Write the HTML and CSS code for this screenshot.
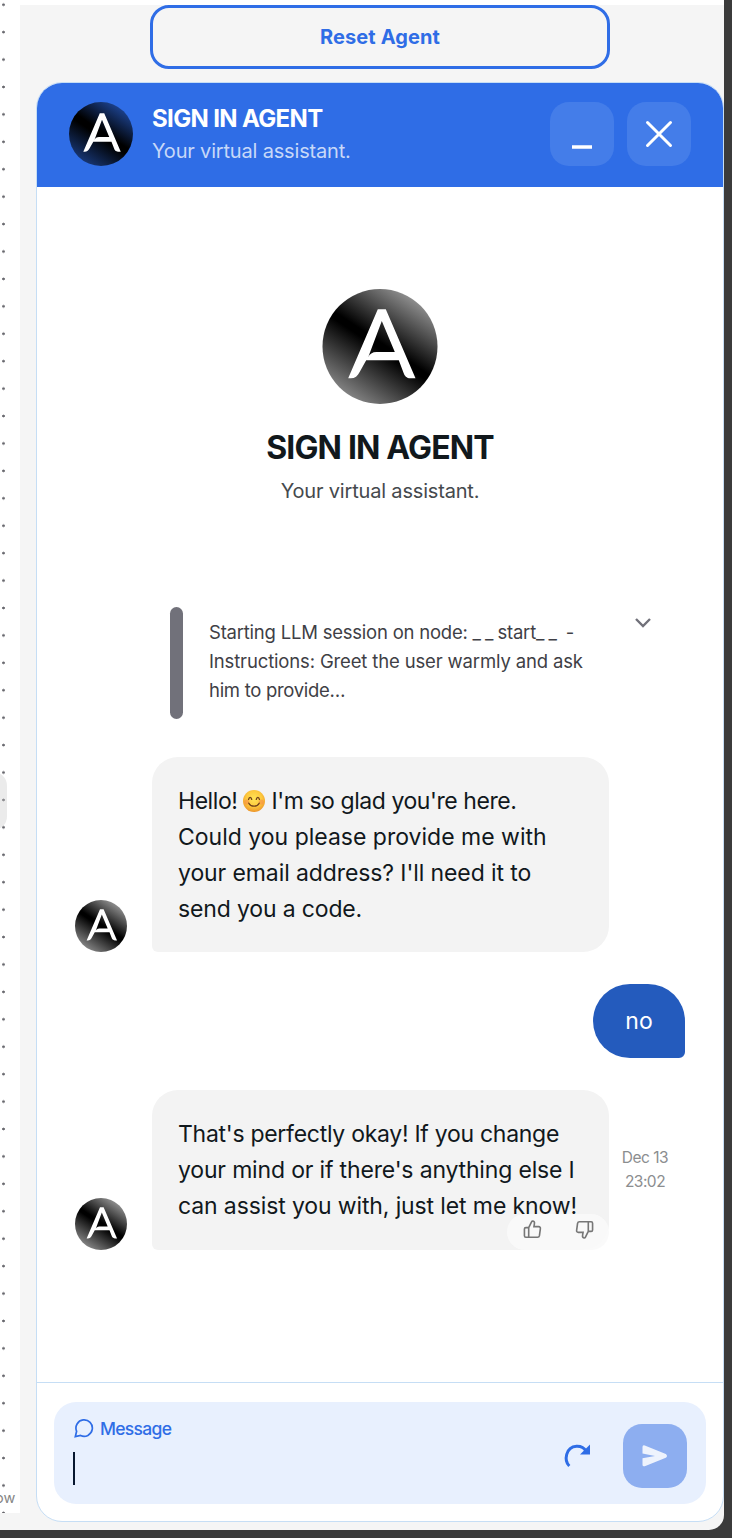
FILE: index.html
```html
<!DOCTYPE html>
<html lang="en">
<head>
<meta charset="utf-8">
<title>Sign in agent</title>
<link rel="stylesheet" href="styles.css">
</head>
<body>
<svg class="defs" aria-hidden="true">
  <defs>
    <linearGradient id="mono" x1=".2" y1=".95" x2=".8" y2=".05">
      <stop offset="0" stop-color="#8c8c8c"/><stop offset=".48" stop-color="#000"/><stop offset=".53" stop-color="#000"/><stop offset="1" stop-color="#999"/>
    </linearGradient>
    <linearGradient id="navy" x1=".2" y1=".95" x2=".8" y2=".05">
      <stop offset="0" stop-color="#193a7b"/><stop offset=".46" stop-color="#000"/><stop offset=".54" stop-color="#000"/><stop offset="1" stop-color="#1e4696"/>
    </linearGradient>
    <symbol id="letter" viewBox="0 0 115 115">
      <path fill="#fff" d="M55.3 20.3h8L93 89.3h-5c-4 0-6-2.600-7-5.600L76.300 71.300H43.700L37.300 82.700c-2 4.300-5 6.600-9 6.600h-2.600ZM59.300 32 45.700 68.300C47 65 50 63 54 63h18.300Z"/>
    </symbol>
  </defs>
</svg>
<div class="screen">
  <aside class="canvas">
    <div class="canvas-dots"></div>
    <div class="canvas-handle"></div>
    <span class="canvas-label">ow</span>
  </aside>
  <main class="panel">
    <button class="reset"><span class="t-reset">Reset Agent</span></button>
    <section class="chat">
      <header class="chat-header">
        <svg class="avatar-header" viewBox="0 0 115 115"><circle cx="57.500" cy="57.500" r="57.500" fill="url(#navy)"/><use href="#letter"/></svg>
        <div class="chat-heading">
          <div class="name"><span class="t-name">SIGN IN AGENT</span></div>
          <div class="tagline"><span class="t-tag">Your virtual assistant.</span></div>
        </div>
        <button class="window-btn"><svg viewBox="0 0 64 64"><path d="M22 45h20" stroke="#fff" stroke-width="3.600"/></svg></button>
        <button class="window-btn"><svg viewBox="0 0 64 64"><path d="M20.500 20.500l23 23m0-23l-23 23" stroke="#fff" stroke-width="3" stroke-linecap="round"/></svg></button>
      </header>
      <div class="chat-body">
        <div class="hero">
          <svg class="avatar-hero" viewBox="0 0 115 115"><circle cx="57.500" cy="57.500" r="57.500" fill="url(#mono)"/><use href="#letter"/></svg>
          <h1><span class="t-hero">SIGN IN AGENT</span></h1>
          <p><span class="t-tag">Your virtual assistant.</span></p>
        </div>
        <div class="log">
          <div class="log-bar"></div>
          <div class="log-text">
            <span class="line l1">Starting LLM session on node: <span class="wide">__</span>start<span class="wide">__</span> -</span>
            <span class="line l2">Instructions: Greet the user warmly and ask</span>
            <span class="line l3">him to provide…</span>
          </div>
          <svg class="chevron" viewBox="0 0 18 12"><path d="M2 2l7 7 7-7" fill="none" stroke="#71717a" stroke-width="2.400"/></svg>
        </div>
        <div class="row agent">
          <svg class="avatar" viewBox="0 0 115 115"><circle cx="57.500" cy="57.500" r="57.500" fill="url(#mono)"/><use href="#letter"/></svg>
          <div class="bubble">
            <span class="line a1">Hello! <svg class="smile" viewBox="0 0 22 22"><defs><radialGradient id="face" cx=".5" cy=".4" r=".6"><stop offset="0" stop-color="#ffe357"/><stop offset=".6" stop-color="#fdc93d"/><stop offset="1" stop-color="#ed962b"/></radialGradient></defs><circle cx="11" cy="11" r="11" fill="url(#face)"/><g fill="#f58a4a" opacity=".55"><circle cx="3.800" cy="12" r="2.600"/><circle cx="18.200" cy="12" r="2.600"/></g><path d="M5.600 9.400c.5-2.800 2.600-2.800 3.100 0M13.300 9.400c.5-2.800 2.600-2.800 3.100 0M5.800 13.200c2 4 8.400 4 10.400 0" fill="none" stroke="#70401a" stroke-width="1.300" stroke-linecap="round"/></svg> I'm so glad you're here.</span>
            <span class="line a2">Could you please provide me with</span>
            <span class="line a3">your email address? I'll need it to</span>
            <span class="line a4">send you a code.</span>
          </div>
        </div>
        <div class="row user"><div class="bubble-user"><span class="t-no">no</span></div></div>
        <div class="row agent">
          <svg class="avatar" viewBox="0 0 115 115"><circle cx="57.500" cy="57.500" r="57.500" fill="url(#mono)"/><use href="#letter"/></svg>
          <div class="bubble short">
            <span class="line b1">That's perfectly okay! If you change</span>
            <span class="line b2">your mind or if there's anything else I</span>
            <span class="line b3">can assist you with, just let me know!</span>
            <div class="feedback">
              <svg viewBox="0 0 20 20"><path d="M1.500 9.500q0-1.500 1.500-1.500h3l3-6q.4-1 1.500-.9 2 .4 1.500 3L11.500 7h5q2 .1 1.800 2l-1 7.500q-.3 1.700-2 1.700H3q-1.500 0-1.500-1.500ZM6 8v10.200"/></svg>
              <svg class="down" viewBox="0 0 20 20"><path d="M1.500 9.500q0-1.500 1.500-1.500h3l3-6q.4-1 1.500-.9 2 .4 1.500 3L11.500 7h5q2 .1 1.800 2l-1 7.500q-.3 1.700-2 1.700H3q-1.500 0-1.500-1.500ZM6 8v10.200"/></svg>
            </div>
          </div>
          <time><span class="line d1">Dec 13</span><span class="line d2">23:02</span></time>
        </div>
      </div>
      <footer>
        <div class="composer">
          <div class="field">
            <label><svg viewBox="0 0 20 20"><path d="M1.300 18.700l1.300-5.400a8.200 8.200 0 1 1 4 4.200Z"/></svg><span class="t-msg">Message</span></label>
            <div class="caret"></div>
          </div>
          <svg class="redo" viewBox="0 0 28 26"><path d="M6.300 23C.8 17.500 2.500 4 13.500 3.200c4.500-.2 7.700 1.600 9.500 5" fill="none" stroke="#2f6de6" stroke-width="3"/><path d="M27 1.500v10H17Z" fill="#2f6de6"/></svg>
          <button class="send"><svg viewBox="0 0 64 64"><path fill="#eef3fd" d="M19.500 23q0-2.200 2.300-1.500l21 8.400q2.400 2.100 0 3.800l-21 8.500q-2.300.6-2.300-1.500v-6.500l12.500-2.300-12.500-2.400Z"/></svg></button>
        </div>
      </footer>
    </section>
  </main>
</div>
</body>
</html>
```
FILE: styles.css
```css
* { box-sizing: border-box; }
body { margin: 0; background: #3b3b3b; font-family: Inter, "Liberation Sans", sans-serif; color: #11181c; }
button { padding: 0; border: 0; font: inherit; }
.defs { position: absolute; width: 0; height: 0; }
.screen { display: flex; width: 724px; height: 1530px; padding-top: 5px; background: linear-gradient(#fff 5px, #f5f5f5 5px); border-radius: 0 0 15px 0; overflow: hidden; }
.canvas { position: relative; width: 20px; height: 1513px; margin-top: -5px; background: #fff; overflow: hidden; }
.canvas-dots { height: 1513px; background: radial-gradient(circle at 3.500px 13.700px, #67676d 1px, transparent 1.700px) 0 -9px / 20px 27.430px repeat-y; }
.canvas-handle { position: absolute; left: -20px; top: 772px; width: 27px; height: 58px; border-radius: 14px; background: rgba(200,200,200,.36); }
.canvas-label { position: absolute; left: -5px; top: 1488px; font-size: 14.500px; line-height: 20px; color: #858585; background: rgba(255,255,255,.6); }
.panel { width: 704px; padding: 0 0 0 16px; display: flex; flex-direction: column; }
.reset { width: 460px; height: 64px; margin: 0 0 13px 114px; border: 3px solid #2f6de6; border-radius: 19px; background: transparent; color: #2f6de6; font-weight: 700; font-size: 20px; letter-spacing: .1px; }
.chat { width: 688px; height: 1440px; border: 1px solid #c6def5; border-radius: 26px; background: #fff; overflow: hidden; display: flex; flex-direction: column; }
.chat-header { height: 104px; padding: 0 32px; display: flex; align-items: center; background: #2f6de6; color: #fff; }
.avatar-header { width: 64px; height: 64px; margin-top: -2px; }
.chat-heading { flex: 1; margin: -3px 0 0 19px; white-space: nowrap; }
.name { font-size: 24px; line-height: 34px; font-weight: 700; letter-spacing: -.65px; }
.tagline { font-size: 20px; line-height: 30px; color: #c7d8f8; }
.t-tag { letter-spacing: -.18px; }
.window-btn { width: 64px; height: 64px; margin: -2px 0 0 13px; border-radius: 19px; background: #447de9; }
.window-btn svg, .send svg { display: block; width: 64px; height: 64px; }
.chat-body { height: 1195px; padding-top: 102px; }
.hero { height: 318px; display: flex; flex-direction: column; align-items: center; white-space: nowrap; }
.avatar-hero { width: 116px; height: 115px; }
.hero h1 { margin: 21px 0 0; font-size: 32px; line-height: 46px; font-weight: 700; letter-spacing: -.85px; }
.hero p { margin: 5px 0 0; font-size: 20px; line-height: 30px; color: #45494d; }
.line { display: block; width: max-content; white-space: nowrap; }
.log { display: flex; height: 112px; margin: 0 71px 38px 133px; }
.log-bar { width: 13px; border-radius: 7px; background: #71717a; }
.log-text { flex: 1; padding: 11px 0 0 26px; font-size: 18.500px; line-height: 29px; color: #3f3f46; }
.l1 { letter-spacing: -.22px; }
.wide { letter-spacing: 4px; }
.l2 { letter-spacing: -.15px; }
.l3 { letter-spacing: -.3px; }
.chevron { width: 18px; height: 12px; margin-top: 10px; }
.row { display: flex; }
.agent { padding-left: 38px; }
.avatar { width: 52px; height: 52px; margin-right: 25px; align-self: flex-end; }
.bubble { position: relative; width: 457px; height: 195px; padding: 26px; border-radius: 26px 26px 26px 6px; background: #f3f3f3; font-size: 23px; line-height: 36px; }
.short { height: 160px; }
.a1 { letter-spacing: -.44px; }
.a3 { letter-spacing: -.1px; }
.a4 { letter-spacing: -.15px; }
.b1 { letter-spacing: -.28px; }
.b2 { letter-spacing: -.17px; }
.b3 { letter-spacing: -.12px; }
.smile { width: 22px; height: 22px; vertical-align: -3px; }
.user { justify-content: flex-end; padding: 32px 38px; }
.bubble-user { width: 92px; height: 74px; border-radius: 37px 37px 6px 37px; background: #245bbd; color: #fff; font-size: 23px; line-height: 74px; text-align: center; }
.feedback { position: absolute; right: 0; bottom: 0; display: flex; justify-content: space-between; width: 102px; height: 36px; padding: 6px 15px 0 16px; border-radius: 20px; background: rgba(250,250,250,.92); }
.feedback svg { width: 19px; height: 19px; fill: none; stroke: #777; stroke-width: 1.700; }
.feedback .down { transform: rotate(180deg); }
time { display: flex; flex-direction: column; align-items: center; width: 46px; margin: 56px 0 0 13px; font-size: 15.500px; line-height: 24px; letter-spacing: -.5px; color: #8b8d8f; }
footer { height: 139px; border-top: 1px solid #c6def5; padding: 19px 17px; }
.composer { display: flex; align-items: flex-start; height: 102px; padding: 6px 19px 0; border-radius: 22px; background: #e8f0fe; }
.field { flex: 1; padding-top: 8px; }
label { display: flex; align-items: center; gap: 6px; height: 24px; padding-left: 1px; color: #2f6de6; font-size: 17.500px; font-weight: 500; letter-spacing: -.7px; }
label svg { width: 20px; height: 20px; fill: none; stroke: #2f6de6; stroke-width: 1.700; }
.caret { width: 2px; height: 33px; margin-top: 12px; background: #07172f; }
.redo { width: 28px; height: 26px; margin: 35px 32px 0 0; }
.send { width: 64px; height: 64px; margin-top: 16px; border-radius: 19px; background: #8daef0; }
```
